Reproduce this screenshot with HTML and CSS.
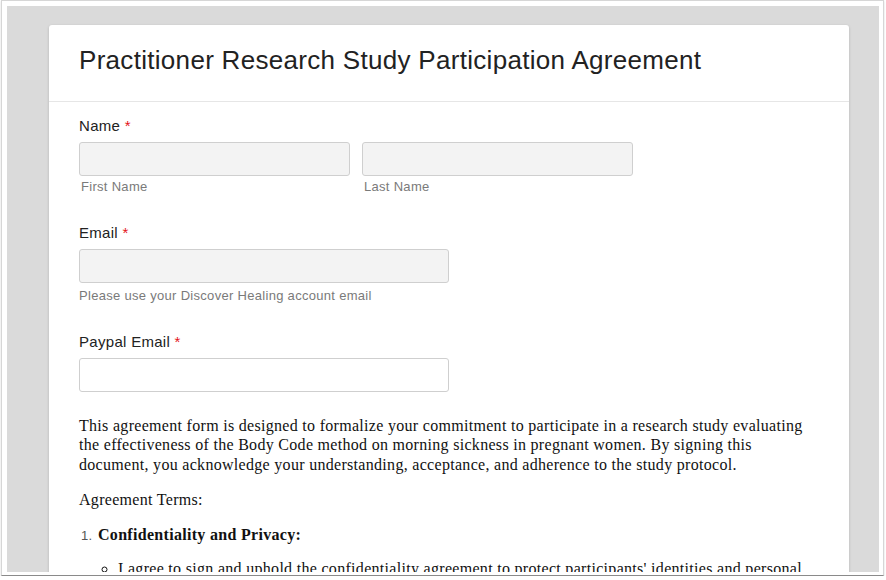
FILE: index.html
```html
<!DOCTYPE html>
<html lang="en">
<head>
    <meta charset="UTF-8">
    <meta name="viewport" content="width=device-width, initial-scale=1.0">
    <title>Practitioner Research Study Participation Agreement</title>
    <link rel="stylesheet" href="styles.css">
</head>
<body>

    <div class="window">
        <div class="viewport">
            <div class="form-card">
                <div class="form-header">
                    <h1>Practitioner Research Study Participation Agreement</h1>
                </div>

                <form class="form-body" id="agreementForm">
                    <div class="form-group">
                        <label class="field-label">Name <span class="req">*</span></label>
                        <div class="name-row">
                            <div class="name-col">
                                <input type="text" class="input filled" id="firstName">
                                <div class="sublabel">First Name</div>
                            </div>
                            <div class="name-col">
                                <input type="text" class="input filled" id="lastName">
                                <div class="sublabel">Last Name</div>
                            </div>
                        </div>
                    </div>

                    <div class="form-group">
                        <label class="field-label" for="email">Email <span class="req">*</span></label>
                        <input type="email" class="input filled medium" id="email">
                        <div class="helper">Please use your Discover Healing account email</div>
                    </div>

                    <div class="form-group last">
                        <label class="field-label" for="paypal">Paypal Email <span class="req">*</span></label>
                        <input type="email" class="input medium" id="paypal">
                    </div>

                    <div class="agreement">
                        <p>This agreement form is designed to formalize your commitment to participate in a research study evaluating the effectiveness of the Body Code method on morning sickness in pregnant women. By signing this document, you acknowledge your understanding, acceptance, and adherence to the study protocol.</p>
                        <p>Agreement Terms:</p>
                        <ol class="terms">
                            <li>
                                <span class="num">1.</span><strong>Confidentiality and Privacy:</strong>
                                <ul>
                                    <li>I agree to sign and uphold the confidentiality agreement to protect participants' identities and personal information.</li>
                                </ul>
                            </li>
                        </ol>
                    </div>
                </form>
            </div>
        </div>
    </div>

</body>
</html>
```

FILE: styles.css
```css
/* Base styles */
body {
    margin: 0;
    padding: 0;
    background: #fff;
    font-family: 'Liberation Sans', Arial, sans-serif;
    letter-spacing: 0.3px;
}

/* Screenshot window frame */
.window {
    box-sizing: border-box;
    width: 883px;
    height: 576px;
    margin-left: 1px;
    padding: 5px 4px 3px 5px;
    border: 1px solid #d6d6d6;
    border-bottom-color: #8a8a8a;
    background: #fff;
    box-shadow: 0 1px 2px rgba(0, 0, 0, 0.15);
}

.viewport {
    height: 566px;
    overflow: hidden;
    background: #dadada;
    padding-top: 19px;
    box-sizing: border-box;
}

.form-card {
    width: 800px;
    margin-left: 42px;
    background: #fff;
    border-radius: 3px;
    box-shadow: 0 1px 3px rgba(0, 0, 0, 0.18);
    min-height: 700px;
}

.form-header {
    padding: 20px 30px 25px;
    border-bottom: 1px solid #e6e6e6;
}

.form-header h1 {
    margin: 0;
    font-size: 26px;
    line-height: 31px;
    font-weight: normal;
    color: #222;
}

.form-body {
    padding: 14px 30px 0;
}

.form-group {
    margin-bottom: 28px;
}

.form-group.last {
    margin-bottom: 24px;
}

.field-label {
    display: block;
    font-size: 15px;
    line-height: 20px;
    color: #222;
    margin-bottom: 6px;
}

.req {
    color: #e4141b;
}

.name-row {
    display: flex;
    gap: 12px;
}

.name-col {
    width: 271px;
}

.input {
    display: block;
    box-sizing: border-box;
    width: 100%;
    height: 34px;
    margin: 0;
    padding: 6px 10px;
    border: 1px solid #cfcfcf;
    border-radius: 3px;
    background: #fff;
    font-size: 14px;
}

.input.filled {
    background: #f3f3f3;
}

.input.medium {
    width: 370px;
}

.sublabel {
    font-size: 13px;
    line-height: 16px;
    color: #7a7a7a;
    margin: 3px 0 0 2px;
}

.helper {
    font-size: 13px;
    line-height: 16px;
    color: #7a7a7a;
    margin-top: 5px;
}

/* Agreement text */
.agreement {
    font-family: 'Liberation Serif', 'Times New Roman', serif;
    font-size: 16px;
    line-height: 19.3px;
    color: #111;
}

.agreement p {
    margin: 0 0 16px;
}

.terms {
    list-style: none;
    margin: 0;
    padding-left: 2px;
}

.terms .num {
    display: inline-block;
    width: 17px;
    font-family: 'Liberation Sans', Arial, sans-serif;
    font-size: 13px;
    color: #555;
}

.terms ul {
    list-style: circle;
    margin: 14px 0 0;
    padding-left: 37px;
}
```
